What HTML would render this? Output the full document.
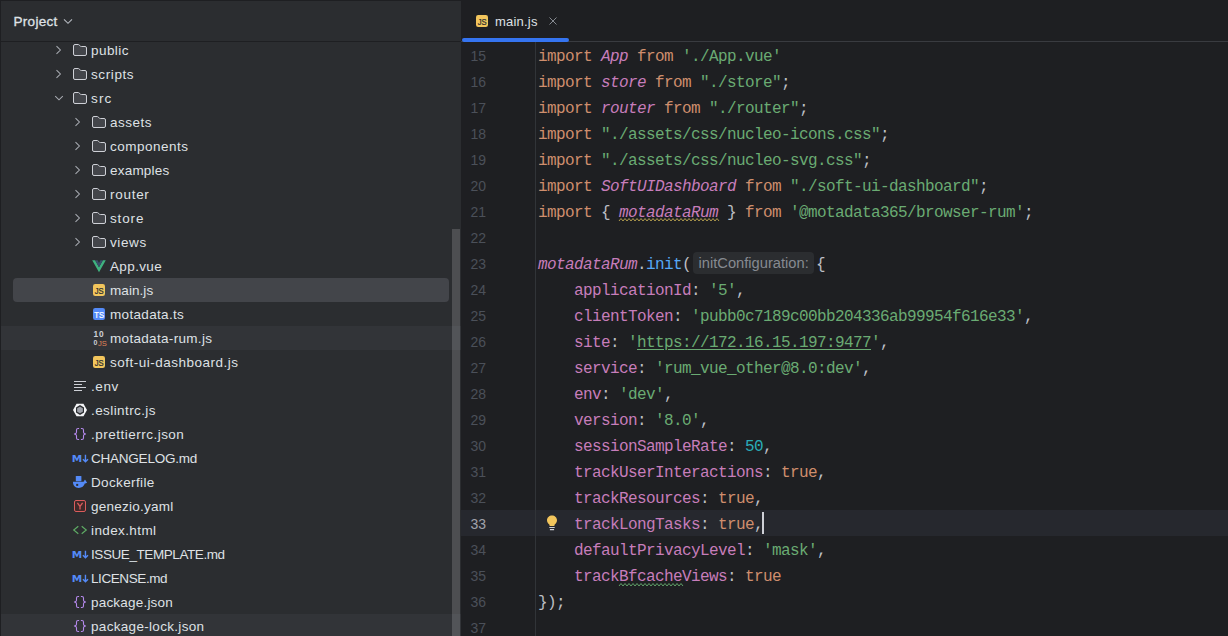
<!DOCTYPE html>
<html><head><meta charset="utf-8"><title>main.js</title>
<style>
html,body{margin:0;padding:0;}
body{width:1228px;height:636px;overflow:hidden;background:#1E1F22;position:relative;font-family:"Liberation Sans",sans-serif;}
#panel{position:absolute;left:0;top:0;width:461px;height:636px;background:#2B2D30;overflow:hidden;}
#panel .edge-l{position:absolute;left:0;top:0;width:1px;height:636px;background:#1E1F22;z-index:5}
#panel .edge-t{position:absolute;left:0;top:0;width:461px;height:1px;background:#1E1F22;z-index:5}
#hdr{position:absolute;left:0;top:0;width:461px;height:41px;background:#2B2D30;border-bottom:1px solid #1E1F22;z-index:3}
#hdr .t{position:absolute;left:13.5px;top:14px;font-size:13.5px;color:#DFE1E5;line-height:16px;letter-spacing:0.3px;-webkit-text-stroke:0.3px #DFE1E5}
#hdr svg{position:absolute;left:60px;top:13px;width:16px;height:16px}
.row{position:absolute;left:0;width:461px;height:24px;}
.row.excl{background:#323438;}
.sel{position:absolute;left:13px;top:0;width:436px;height:24px;border-radius:4px;background:#43454A}
.ic{position:absolute;top:4px;width:16px;height:16px;overflow:visible}
.ch{position:absolute;top:4px;width:16px;height:16px}
.lb{position:absolute;top:1px;line-height:24px;font-size:13.5px;color:#DFE1E5;white-space:pre}
#sb{position:absolute;left:452px;top:229px;width:8.4px;height:407px;background:rgba(255,255,255,0.16)}
#ed{position:absolute;left:461px;top:0;width:767px;height:636px;background:#1E1F22;overflow:hidden}
#tabs{position:absolute;left:0;top:0;width:767px;height:41px;border-bottom:1px solid #393B40;}
#tab .t{position:absolute;left:34px;top:14px;letter-spacing:0.2px;font-size:13px;color:#DFE1E5;line-height:16px}
#tab .ul{position:absolute;left:1px;top:38px;width:107px;height:4px;border-radius:2px;background:#3574F0;z-index:2}
#tab svg.tic{position:absolute;left:13px;top:13px;width:16px;height:16px}
#tab svg.x{position:absolute;left:84px;top:13px;width:16px;height:16px}
.ln{position:absolute;left:0;width:25px;text-align:right;font:14px/26px "Liberation Sans",sans-serif;color:#4B5059;height:26px}
.ln.cur{color:#A1A3AB}
#gl{position:absolute;left:74px;top:42px;width:1px;height:594px;background:#313438}
#curline{position:absolute;left:0;top:510px;width:767px;height:26px;background:#26282E}
.cl{position:absolute;left:77px;font:16px/26px "Liberation Mono",monospace;letter-spacing:-0.602px;color:#BCBEC4;white-space:pre;height:26px}
.k{color:#CF8E6D} .s{color:#6AAB73} .i{color:#C77DBB;font-style:italic} .p{color:#C77DBB} .n{color:#2AACB8} .f{color:#56A8F5}
.s u{text-decoration:underline;text-underline-offset:2px}
.hint{display:inline-block;box-sizing:border-box;width:121px;font:14.7px/22px "Liberation Sans",sans-serif;letter-spacing:0;color:#868A91;background:#2B2D30;border-radius:4px;padding:0 0 0 5.5px;margin:0 2px 0 2px;vertical-align:1.4px;height:22px;white-space:nowrap}
.caret{position:absolute;left:224px;top:0px;width:2px;height:22px;background:#CED0D6}
.wy{}
.wg{}
.wave{position:absolute;height:4px;overflow:visible}
#bulb{position:absolute;left:83px;top:514px;width:16px;height:18px}
</style></head><body>
<div id="panel">
<div class="edge-l"></div><div class="edge-t"></div>
<div id="hdr"><span class="t">Project</span><svg viewBox="0 0 16 16"><path d="M4 6.300L8 10.300 12 6.300" stroke="#B4B8BF" stroke-width="1.100" fill="none"/></svg></div>
<div class="row" style="top:38px"><svg class="ch" style="left:50px" viewBox="0 0 16 16"><path d="M6.500 4.100L10.400 8 6.500 11.900" stroke="#A8ABB2" stroke-width="1.050" fill="none"/></svg><svg class="ic" style="left:72px" viewBox="0 0 16 16"><path d="M1.500 4A1.500 1.500 0 0 1 3 2.500H6.100c.4 0 .750.150 1 .450L8.300 4.050c.250.300.6.450 1 .450H13A1.500 1.500 0 0 1 14.500 6V12A1.500 1.500 0 0 1 13 13.500H3A1.500 1.500 0 0 1 1.500 12Z" fill="#43454A" stroke="#CED0D6" stroke-width="1"/></svg><span class="lb" style="left:91px;letter-spacing:0.44px">public</span></div>
<div class="row" style="top:62px"><svg class="ch" style="left:50px" viewBox="0 0 16 16"><path d="M6.500 4.100L10.400 8 6.500 11.900" stroke="#A8ABB2" stroke-width="1.050" fill="none"/></svg><svg class="ic" style="left:72px" viewBox="0 0 16 16"><path d="M1.500 4A1.500 1.500 0 0 1 3 2.500H6.100c.4 0 .750.150 1 .450L8.300 4.050c.250.300.6.450 1 .450H13A1.500 1.500 0 0 1 14.500 6V12A1.500 1.500 0 0 1 13 13.500H3A1.500 1.500 0 0 1 1.500 12Z" fill="#43454A" stroke="#CED0D6" stroke-width="1"/></svg><span class="lb" style="left:91px;letter-spacing:0.60px">scripts</span></div>
<div class="row" style="top:86px"><svg class="ch" style="left:50px" viewBox="0 0 16 16"><path d="M5.200 6.100L9 9.800 12.800 6.100" stroke="#A8ABB2" stroke-width="1.050" fill="none"/></svg><svg class="ic" style="left:72px" viewBox="0 0 16 16"><path d="M1.500 4A1.500 1.500 0 0 1 3 2.500H6.100c.4 0 .750.150 1 .450L8.300 4.050c.250.300.6.450 1 .450H13A1.500 1.500 0 0 1 14.500 6V12A1.500 1.500 0 0 1 13 13.500H3A1.500 1.500 0 0 1 1.500 12Z" fill="#43454A" stroke="#CED0D6" stroke-width="1"/></svg><span class="lb" style="left:91px;letter-spacing:1.15px">src</span></div>
<div class="row" style="top:110px"><svg class="ch" style="left:69px" viewBox="0 0 16 16"><path d="M6.500 4.100L10.400 8 6.500 11.900" stroke="#A8ABB2" stroke-width="1.050" fill="none"/></svg><svg class="ic" style="left:91px" viewBox="0 0 16 16"><path d="M1.500 4A1.500 1.500 0 0 1 3 2.500H6.100c.4 0 .750.150 1 .450L8.300 4.050c.250.300.6.450 1 .450H13A1.500 1.500 0 0 1 14.500 6V12A1.500 1.500 0 0 1 13 13.500H3A1.500 1.500 0 0 1 1.500 12Z" fill="#43454A" stroke="#CED0D6" stroke-width="1"/></svg><span class="lb" style="left:110px;letter-spacing:0.50px">assets</span></div>
<div class="row" style="top:134px"><svg class="ch" style="left:69px" viewBox="0 0 16 16"><path d="M6.500 4.100L10.400 8 6.500 11.900" stroke="#A8ABB2" stroke-width="1.050" fill="none"/></svg><svg class="ic" style="left:91px" viewBox="0 0 16 16"><path d="M1.500 4A1.500 1.500 0 0 1 3 2.500H6.100c.4 0 .750.150 1 .450L8.300 4.050c.250.300.6.450 1 .450H13A1.500 1.500 0 0 1 14.500 6V12A1.500 1.500 0 0 1 13 13.500H3A1.500 1.500 0 0 1 1.500 12Z" fill="#43454A" stroke="#CED0D6" stroke-width="1"/></svg><span class="lb" style="left:110px;letter-spacing:0.49px">components</span></div>
<div class="row" style="top:158px"><svg class="ch" style="left:69px" viewBox="0 0 16 16"><path d="M6.500 4.100L10.400 8 6.500 11.900" stroke="#A8ABB2" stroke-width="1.050" fill="none"/></svg><svg class="ic" style="left:91px" viewBox="0 0 16 16"><path d="M1.500 4A1.500 1.500 0 0 1 3 2.500H6.100c.4 0 .750.150 1 .450L8.300 4.050c.250.300.6.450 1 .450H13A1.500 1.500 0 0 1 14.500 6V12A1.500 1.500 0 0 1 13 13.500H3A1.500 1.500 0 0 1 1.500 12Z" fill="#43454A" stroke="#CED0D6" stroke-width="1"/></svg><span class="lb" style="left:110px;letter-spacing:0.21px">examples</span></div>
<div class="row" style="top:182px"><svg class="ch" style="left:69px" viewBox="0 0 16 16"><path d="M6.500 4.100L10.400 8 6.500 11.900" stroke="#A8ABB2" stroke-width="1.050" fill="none"/></svg><svg class="ic" style="left:91px" viewBox="0 0 16 16"><path d="M1.500 4A1.500 1.500 0 0 1 3 2.500H6.100c.4 0 .750.150 1 .450L8.300 4.050c.250.300.6.450 1 .450H13A1.500 1.500 0 0 1 14.500 6V12A1.500 1.500 0 0 1 13 13.500H3A1.500 1.500 0 0 1 1.500 12Z" fill="#43454A" stroke="#CED0D6" stroke-width="1"/></svg><span class="lb" style="left:110px;letter-spacing:0.72px">router</span></div>
<div class="row" style="top:206px"><svg class="ch" style="left:69px" viewBox="0 0 16 16"><path d="M6.500 4.100L10.400 8 6.500 11.900" stroke="#A8ABB2" stroke-width="1.050" fill="none"/></svg><svg class="ic" style="left:91px" viewBox="0 0 16 16"><path d="M1.500 4A1.500 1.500 0 0 1 3 2.500H6.100c.4 0 .750.150 1 .450L8.300 4.050c.250.300.6.450 1 .450H13A1.500 1.500 0 0 1 14.500 6V12A1.500 1.500 0 0 1 13 13.500H3A1.500 1.500 0 0 1 1.500 12Z" fill="#43454A" stroke="#CED0D6" stroke-width="1"/></svg><span class="lb" style="left:110px;letter-spacing:0.85px">store</span></div>
<div class="row" style="top:230px"><svg class="ch" style="left:69px" viewBox="0 0 16 16"><path d="M6.500 4.100L10.400 8 6.500 11.900" stroke="#A8ABB2" stroke-width="1.050" fill="none"/></svg><svg class="ic" style="left:91px" viewBox="0 0 16 16"><path d="M1.500 4A1.500 1.500 0 0 1 3 2.500H6.100c.4 0 .750.150 1 .450L8.300 4.050c.250.300.6.450 1 .450H13A1.500 1.500 0 0 1 14.500 6V12A1.500 1.500 0 0 1 13 13.500H3A1.500 1.500 0 0 1 1.500 12Z" fill="#43454A" stroke="#CED0D6" stroke-width="1"/></svg><span class="lb" style="left:110px;letter-spacing:0.60px">views</span></div>
<div class="row" style="top:254px"><svg class="ic" style="left:91px" viewBox="0 0 16 16"><path d="M1.2 2.3h2.9L8 9.2l3.9-6.900h2.900L8 14.200z" fill="#3FB27F"/><path d="M4.100 2.300h2.500L8 4.900l1.400-2.600h2.500L8 9.200z" fill="#3A4F6B"/></svg><span class="lb" style="left:110px;letter-spacing:0.37px">App.vue</span></div>
<div class="row" style="top:278px"><div class="sel"></div><svg class="ic" style="left:91px" viewBox="0 0 16 16"><rect x="2" y="2" width="12" height="12" rx="2.200" fill="#F2C55C"/><text transform="translate(8.100 11.900) scale(0.880 1)" x="0" y="0" font-family="Liberation Sans, sans-serif" font-size="8.700" text-anchor="middle" fill="#2B2D30" stroke="#2B2D30" stroke-width="0.250">JS</text></svg><span class="lb" style="left:110px;letter-spacing:0.07px">main.js</span></div>
<div class="row" style="top:302px"><svg class="ic" style="left:91px" viewBox="0 0 16 16"><rect x="2" y="2" width="12" height="12" rx="2.200" fill="#548AF7"/><text transform="translate(8.100 11.900) scale(0.880 1)" x="0" y="0" font-family="Liberation Sans, sans-serif" font-size="8.700" text-anchor="middle" fill="#FFFFFF" stroke="#FFFFFF" stroke-width="0.250">TS</text></svg><span class="lb" style="left:110px;letter-spacing:0.33px">motadata.ts</span></div>
<div class="row excl" style="top:326px"><svg class="ic" style="left:91px" viewBox="0 0 16 16"><text x="2.600" y="6.700" font-family="Liberation Sans, sans-serif" font-weight="bold" font-size="8.300" fill="#CED0D6" letter-spacing="0.700">10</text><text x="2.600" y="15" font-family="Liberation Sans, sans-serif" font-weight="bold" font-size="7" fill="#CED0D6">0</text><text x="7" y="16" font-family="Liberation Sans, sans-serif" font-size="7.600" fill="#E0865A">JS</text></svg><span class="lb" style="left:110px;letter-spacing:0.32px">motadata-rum.js</span></div>
<div class="row" style="top:350px"><svg class="ic" style="left:91px" viewBox="0 0 16 16"><rect x="2" y="2" width="12" height="12" rx="2.200" fill="#F2C55C"/><text transform="translate(8.100 11.900) scale(0.880 1)" x="0" y="0" font-family="Liberation Sans, sans-serif" font-size="8.700" text-anchor="middle" fill="#2B2D30" stroke="#2B2D30" stroke-width="0.250">JS</text></svg><span class="lb" style="left:110px;letter-spacing:0.50px">soft-ui-dashboard.js</span></div>
<div class="row" style="top:374px"><svg class="ic" style="left:72px" viewBox="0 0 16 16"><path d="M2 3.500h12M2 6.500h8M2 9.500h12M2 12.500h8" stroke="#CED0D6" stroke-width="1" fill="none"/></svg><span class="lb" style="left:91px;letter-spacing:0.60px">.env</span></div>
<div class="row" style="top:398px"><svg class="ic" style="left:72px" viewBox="0 0 16 16"><path d="M1 8L4.500 1.700h7L15 8l-3.500 6.300h-7z" fill="#F4F5F7"/><path d="M8 3.100L12 5.500v5L8 12.900 4 10.500v-5z" fill="#2B2D30"/><path d="M8 4.700l2.850 1.650v3.300L8 11.300 5.150 9.650v-3.300z" fill="#9DA0A8"/></svg><span class="lb" style="left:91px;letter-spacing:0.41px">.eslintrc.js</span></div>
<div class="row" style="top:422px"><svg class="ic" style="left:72px" viewBox="0 0 16 16"><path d="M7.100 2.500H6.100C5.200 2.500 4.500 3.200 4.500 4.100v2.100C4.500 7.100 3.800 7.800 2.400 8c1.400.2 2.100.9 2.100 1.800v2.100c0 .9.700 1.600 1.600 1.600h1M8.900 2.500h1c.9 0 1.600.700 1.600 1.600v2.100c0 .9.700 1.600 2.100 1.800-1.400.2-2.100.9-2.100 1.800v2.100c0 .9-.7 1.600-1.600 1.600h-1" stroke="#B589EC" stroke-width="1.100" fill="none" stroke-linecap="butt" stroke-linejoin="round"/></svg><span class="lb" style="left:91px;letter-spacing:0.49px">.prettierrc.json</span></div>
<div class="row" style="top:446px"><svg class="ic" style="left:72px" viewBox="0 0 16 16"><text transform="translate(-0.300 11.900) scale(1.22 1)" x="0" y="0" font-family="DejaVu Sans, sans-serif" font-weight="bold" font-size="8.6" fill="#548AF7">M</text><path d="M13.450 4.800v6.500M10.900 9.200l2.550 2.600 2.550-2.600" stroke="#548AF7" stroke-width="1.400" fill="none"/></svg><span class="lb" style="left:91px;letter-spacing:-0.23px">CHANGELOG.md</span></div>
<div class="row" style="top:470px"><svg class="ic" style="left:72px" viewBox="0 0 16 16"><rect x="3.800" y="2" width="5.600" height="5.300" rx="0.600" fill="#548AF7"/><path d="M1 7.800h10.300c.7-.2 1.100-.7 1.100-1.500 0-.500.500-.800.900-.400.700.600.900 1.300.8 1.900h.6c.400 0 .500.400.300.700-.500.700-1.300 1.100-2.200 1.100C12 12.100 9.900 14 6.800 14 3.200 14 1 11.600 1 8.300z" fill="#548AF7"/><rect x="4.200" y="9.900" width="2" height="2" fill="#2B2D30"/></svg><span class="lb" style="left:91px;letter-spacing:0.37px">Dockerfile</span></div>
<div class="row" style="top:494px"><svg class="ic" style="left:72px" viewBox="0 0 16 16"><rect x="2.500" y="2.500" width="11" height="11" rx="1.500" fill="#402929" stroke="#DB5C5C" stroke-width="1"/><path d="M5.400 4.900L8 8.400l2.600-3.500M8 8.400v3" stroke="#DB5C5C" stroke-width="1.300" fill="none"/></svg><span class="lb" style="left:91px;letter-spacing:0.25px">genezio.yaml</span></div>
<div class="row" style="top:518px"><svg class="ic" style="left:72px" viewBox="0 0 16 16"><path d="M6.300 4.200L1.700 8l4.600 3.800M9.700 4.200L14.300 8l-4.600 3.800" stroke="#5FAD65" stroke-width="1.150" fill="none"/></svg><span class="lb" style="left:91px;letter-spacing:0.39px">index.html</span></div>
<div class="row" style="top:542px"><svg class="ic" style="left:72px" viewBox="0 0 16 16"><text transform="translate(-0.300 11.900) scale(1.22 1)" x="0" y="0" font-family="DejaVu Sans, sans-serif" font-weight="bold" font-size="8.6" fill="#548AF7">M</text><path d="M13.450 4.800v6.500M10.900 9.200l2.550 2.600 2.550-2.600" stroke="#548AF7" stroke-width="1.400" fill="none"/></svg><span class="lb" style="left:91px;letter-spacing:-0.42px">ISSUE_TEMPLATE.md</span></div>
<div class="row" style="top:566px"><svg class="ic" style="left:72px" viewBox="0 0 16 16"><text transform="translate(-0.300 11.900) scale(1.22 1)" x="0" y="0" font-family="DejaVu Sans, sans-serif" font-weight="bold" font-size="8.6" fill="#548AF7">M</text><path d="M13.450 4.800v6.500M10.900 9.200l2.550 2.600 2.550-2.600" stroke="#548AF7" stroke-width="1.400" fill="none"/></svg><span class="lb" style="left:91px;letter-spacing:-0.41px">LICENSE.md</span></div>
<div class="row" style="top:590px"><svg class="ic" style="left:72px" viewBox="0 0 16 16"><path d="M7.100 2.500H6.100C5.200 2.500 4.500 3.200 4.500 4.100v2.100C4.500 7.100 3.800 7.800 2.400 8c1.400.2 2.100.9 2.100 1.800v2.100c0 .9.700 1.600 1.600 1.600h1M8.900 2.500h1c.9 0 1.600.700 1.600 1.600v2.100c0 .9.700 1.600 2.100 1.800-1.400.2-2.100.9-2.100 1.800v2.100c0 .9-.7 1.600-1.600 1.600h-1" stroke="#B589EC" stroke-width="1.100" fill="none" stroke-linecap="butt" stroke-linejoin="round"/></svg><span class="lb" style="left:91px;letter-spacing:0.20px">package.json</span></div>
<div class="row excl" style="top:614px"><svg class="ic" style="left:72px" viewBox="0 0 16 16"><path d="M7.100 2.500H6.100C5.200 2.500 4.500 3.200 4.500 4.100v2.100C4.500 7.100 3.800 7.800 2.400 8c1.400.2 2.100.9 2.100 1.800v2.100c0 .9.700 1.600 1.600 1.600h1M8.900 2.500h1c.9 0 1.600.700 1.600 1.600v2.100c0 .9.700 1.600 2.100 1.800-1.400.2-2.100.9-2.100 1.800v2.100c0 .9-.7 1.600-1.600 1.600h-1" stroke="#B589EC" stroke-width="1.100" fill="none" stroke-linecap="butt" stroke-linejoin="round"/></svg><span class="lb" style="left:91px;letter-spacing:0.31px">package-lock.json</span></div>
<div id="sb"></div>
</div>
<div id="ed">
<div id="curline"></div>
<div id="tabs"><div id="tab"><svg class="tic" viewBox="0 0 16 16"><rect x="2" y="2" width="12" height="12" rx="2.200" fill="#F2C55C"/><text transform="translate(8.100 11.900) scale(0.880 1)" x="0" y="0" font-family="Liberation Sans, sans-serif" font-size="8.700" text-anchor="middle" fill="#2B2D30" stroke="#2B2D30" stroke-width="0.250">JS</text></svg><span class="t">main.js</span><svg class="x" viewBox="0 0 16 16"><path d="M4.500 4.500l7 7M11.500 4.500l-7 7" stroke="#868A91" stroke-width="1" fill="none"/></svg><div class="ul"></div></div></div>
<div class="ln" style="top:43px">15</div><div class="ln" style="top:69px">16</div><div class="ln" style="top:95px">17</div><div class="ln" style="top:121px">18</div><div class="ln" style="top:147px">19</div><div class="ln" style="top:173px">20</div><div class="ln" style="top:199px">21</div><div class="ln" style="top:225px">22</div><div class="ln" style="top:251px">23</div><div class="ln" style="top:277px">24</div><div class="ln" style="top:303px">25</div><div class="ln" style="top:329px">26</div><div class="ln" style="top:355px">27</div><div class="ln" style="top:381px">28</div><div class="ln" style="top:407px">29</div><div class="ln" style="top:433px">30</div><div class="ln" style="top:459px">31</div><div class="ln" style="top:485px">32</div><div class="ln cur" style="top:511px">33</div><div class="ln" style="top:537px">34</div><div class="ln" style="top:563px">35</div><div class="ln" style="top:589px">36</div><div class="ln" style="top:615px">37</div>
<div id="gl"></div>
<svg id="bulb" viewBox="0 0 16 18"><path d="M8 1.500c-2.800 0-5 2.100-5 4.800 0 1.700.9 3 2 3.900.4.300.6.800.6 1.300v.500h4.800v-.500c0-.5.200-1 .6-1.300 1.100-.9 2-2.200 2-3.900 0-2.700-2.200-4.800-5-4.800z" fill="#F2C55C"/><path d="M5.300 13.500h5.400M5.900 15.600h4.200" stroke="#CED0D6" stroke-width="1.200"/></svg>
<div class="cl" style="top:44px"><span class="k">import</span> <span class="i">App</span> <span class="k">from</span> <span class="s">'./App.vue'</span></div><div class="cl" style="top:70px"><span class="k">import</span> <span class="i">store</span> <span class="k">from</span> <span class="s">"./store"</span>;</div><div class="cl" style="top:96px"><span class="k">import</span> <span class="i">router</span> <span class="k">from</span> <span class="s">"./router"</span>;</div><div class="cl" style="top:122px"><span class="k">import</span> <span class="s">"./assets/css/nucleo-icons.css"</span>;</div><div class="cl" style="top:148px"><span class="k">import</span> <span class="s">"./assets/css/nucleo-svg.css"</span>;</div><div class="cl" style="top:174px"><span class="k">import</span> <span class="i">SoftUIDashboard</span> <span class="k">from</span> <span class="s">"./soft-ui-dashboard"</span>;</div><div class="cl" style="top:200px"><span class="k">import</span> { <span class="i wy">motadataRum</span> } <span class="k">from</span> <span class="s">'@motadata365/browser-rum'</span>;</div><div class="cl" style="top:226px"></div><div class="cl" style="top:252px"><span class="i">motadataRum</span>.<span class="f">init</span>(<span class="hint">initConfiguration:</span>{</div><div class="cl" style="top:278px">    <span class="p">applicationId</span>: <span class="s">'5'</span>,</div><div class="cl" style="top:304px">    <span class="p">clientToken</span>: <span class="s">'pubb0c7189c00bb204336ab99954f616e33'</span>,</div><div class="cl" style="top:330px">    <span class="p">site</span>: <span class="s">'<u>https://172.16.15.197:9477</u>'</span>,</div><div class="cl" style="top:356px">    <span class="p">service</span>: <span class="s">'rum_vue_other@8.0:dev'</span>,</div><div class="cl" style="top:382px">    <span class="p">env</span>: <span class="s">'dev'</span>,</div><div class="cl" style="top:408px">    <span class="p">version</span>: <span class="s">'8.0'</span>,</div><div class="cl" style="top:434px">    <span class="p">sessionSampleRate</span>: <span class="n">50</span>,</div><div class="cl" style="top:460px">    <span class="p">trackUserInteractions</span>: <span class="k">true</span>,</div><div class="cl" style="top:486px">    <span class="p">trackResources</span>: <span class="k">true</span>,</div><div class="cl" style="top:512px">    <span class="p">trackLongTasks</span>: <span class="k">true</span>,<span class="caret"></span></div><div class="cl" style="top:538px">    <span class="p">defaultPrivacyLevel</span>: <span class="s">'mask'</span>,</div><div class="cl" style="top:564px">    <span class="p">track<span class="wg">Bfcache</span>Views</span>: <span class="k">true</span></div><div class="cl" style="top:590px">});</div><div class="cl" style="top:616px"></div>
<svg class="wave" style="left:158px;top:218px;width:99px" viewBox="0 0 99 4"><path d="M0 3L2 0.5L4 3L6 0.5L8 3L10 0.5L12 3L14 0.5L16 3L18 0.5L20 3L22 0.5L24 3L26 0.5L28 3L30 0.5L32 3L34 0.5L36 3L38 0.5L40 3L42 0.5L44 3L46 0.5L48 3L50 0.5L52 3L54 0.5L56 3L58 0.5L60 3L62 0.5L64 3L66 0.5L68 3L70 0.5L72 3L74 0.5L76 3L78 0.5L80 3L82 0.5L84 3L86 0.5L88 3L90 0.5L92 3L94 0.5L96 3L98 0.5L100 3" stroke="#B09B4D" stroke-width="1" fill="none"/></svg><svg class="wave" style="left:158px;top:582.5px;width:63px" viewBox="0 0 63 4"><path d="M0 3L2 0.5L4 3L6 0.5L8 3L10 0.5L12 3L14 0.5L16 3L18 0.5L20 3L22 0.5L24 3L26 0.5L28 3L30 0.5L32 3L34 0.5L36 3L38 0.5L40 3L42 0.5L44 3L46 0.5L48 3L50 0.5L52 3L54 0.5L56 3L58 0.5L60 3L62 0.5L64 3" stroke="#5FA068" stroke-width="1" fill="none"/></svg>
</div>
</body></html>
